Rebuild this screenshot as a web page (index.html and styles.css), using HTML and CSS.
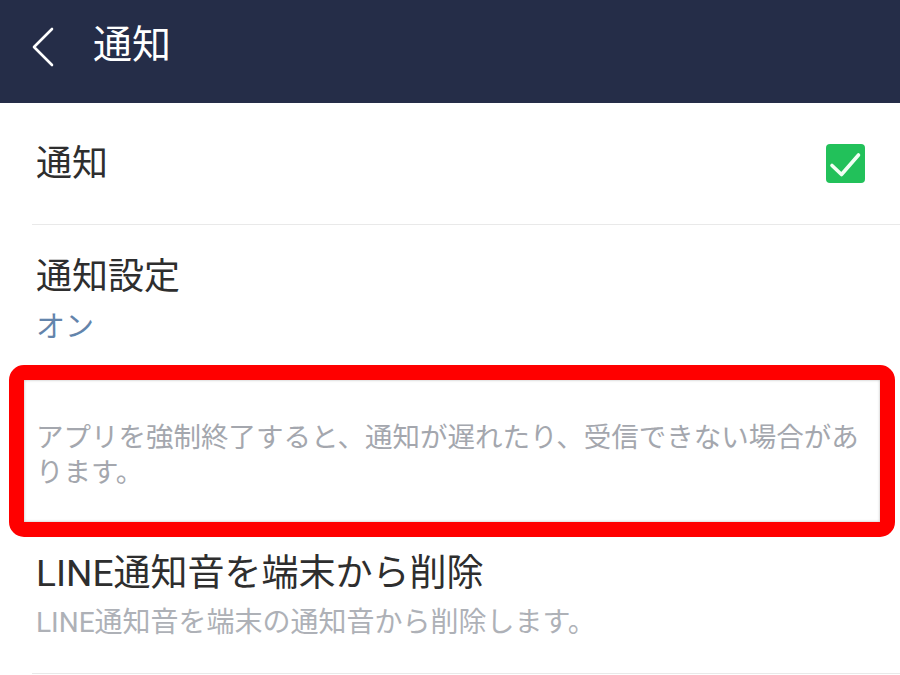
FILE: index.html
```html
<!DOCTYPE html>
<html lang="ja">
<head>
<meta charset="utf-8">
<title>通知</title>
<link rel="stylesheet" href="styles.css">
</head>
<body>
<header class="appbar">
  <svg class="back" width="24" height="40" viewBox="0 0 24 40" aria-hidden="true">
    <path d="M20 2 L2 20 L20 38" fill="none" stroke="#ffffff" stroke-width="2.6" stroke-linecap="round" stroke-linejoin="round"/>
  </svg>
  <h1 class="appbar-title">通知</h1>
</header>
<main class="list">
  <div class="item item-toggle">
    <span class="item-title">通知</span>
    <svg class="check" width="39" height="39" viewBox="0 0 39 39" aria-hidden="true">
      <rect x="0" y="0" width="39" height="39" rx="4" fill="#22c15a"/>
      <path d="M6 21.5 L15.5 30.5 L32.5 11" fill="none" stroke="#f2fff4" stroke-width="3.6" stroke-linecap="round" stroke-linejoin="round"/>
    </svg>
  </div>
  <div class="item item-setting">
    <div class="item-title">通知設定</div>
    <div class="item-value">オン</div>
  </div>
  <div class="note">
    <p class="note-text">アプリを強制終了すると、通知が遅れたり、受信できない場合があります。</p>
    <div class="highlight"></div>
  </div>
  <div class="item item-action">
    <div class="item-title item-title-lg">LINE通知音を端末から削除</div>
    <div class="item-sub">LINE通知音を端末の通知音から削除します。</div>
  </div>
</main>
</body>
</html>
```
FILE: styles.css
```css
* { box-sizing: border-box; }
html, body { margin: 0; padding: 0; background: #ffffff; }
body {
  width: 900px;
  height: 675px;
  overflow: hidden;
  font-family: Roboto, "Noto Sans CJK JP", sans-serif;
  color: #2e2e2e;
}
.appbar {
  height: 103px;
  background: #252d48;
  display: flex;
  align-items: center;
  padding-left: 32px;
}
.back { display: block; margin-top: -10px; }
.appbar-title {
  margin: -12px 0 0 37px;
  font-size: 39px;
  line-height: 39px;
  font-weight: 400;
  color: #ffffff;
}
.list { margin: 0; }
.item {
  margin-left: 32px;
  padding-left: 4px;
}
.item-title {
  font-size: 36px;
  line-height: 36px;
  color: #2e2e2e;
}
.item-title-lg {
  font-size: 37px;
  line-height: 37px;
}
.item-toggle {
  height: 122px;
  display: flex;
  align-items: center;
  justify-content: space-between;
  padding-right: 35px;
  border-bottom: 1px solid #e9e9e9;
}
.check { display: block; }
.item-setting {
  padding-top: 34px;
  padding-bottom: 18px;
  display: flex;
  flex-direction: column;
  gap: 18px;
}
.item-value {
  font-size: 29px;
  line-height: 29px;
  color: #6384ab;
}
.note {
  position: relative;
  height: 180px;
  padding: 60px 0 0 36px;
}
.note-text {
  margin: 0;
  width: 832px;
  font-size: 27.5px;
  line-height: 35px;
  color: #a4a7ae;
}
.highlight {
  position: absolute;
  left: 9px;
  right: 5px;
  top: 5px;
  bottom: 3px;
  border: 15px solid #ff0000;
  border-radius: 15px;
  box-shadow: inset 0 0 3px rgba(0, 0, 0, 0.28);
}
.item-action {
  padding-top: 15px;
  padding-bottom: 36px;
  border-bottom: 1px solid #e9e9e9;
  display: flex;
  flex-direction: column;
  gap: 17px;
}
.item-sub {
  font-size: 28px;
  line-height: 28px;
  color: #aeb1b7;
}
```
